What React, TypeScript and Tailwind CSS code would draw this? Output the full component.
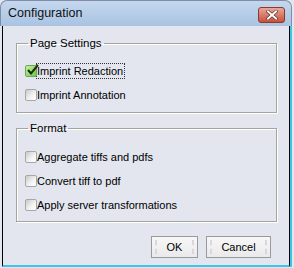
import React from "react";

function Box({ checked }: { checked?: boolean }) {
  return (
    <span className="relative inline-block w-[12px] h-[12px] shrink-0">
      <span
        className={
          checked
            ? "absolute inset-0 rounded-[2px] border border-[#6aa84f] bg-[linear-gradient(135deg,#c8f0a8,#6cc844)]"
            : "absolute inset-0 rounded-[2px] border border-[#a7a7a7] bg-[linear-gradient(135deg,#c9c9c9,#f4f4f4_60%,#ffffff)]"
        }
      />
      {checked && (
        <svg className="absolute left-[1px] top-[-2px]" width="13" height="13" viewBox="0 0 13 13">
          <path d="M2 7 L5 10.5 L12 2" fill="none" stroke="#1b2a12" strokeWidth="2" />
        </svg>
      )}
    </span>
  );
}

function Row({ label, checked, focus }: { label: string; checked?: boolean; focus?: boolean }) {
  return (
    <div className="flex items-center h-[16px]">
      <Box checked={checked} />
      <span
        className={
          focus
            ? "-ml-[1px] pr-[1px] leading-[14px] border border-dotted border-[#333] text-black"
            : "-ml-[1px] leading-[14px] border border-transparent text-black"
        }
      >
        {label}
      </span>
    </div>
  );
}

function Group({ title, children, pt }: { title: string; children: React.ReactNode; pt: string }) {
  return (
    <fieldset
      className={`border border-[#a3a69b] shadow-[inset_1px_1px_0_#ffffff,1px_1px_0_#ffffff] px-[8px] ${pt}`}
    >
      <legend className="ml-[3px] px-[2px] leading-[14px] text-[11.5px] text-black">{title}</legend>
      {children}
    </fieldset>
  );
}

function Btn({ label, w }: { label: string; w: string }) {
  return (
    <div
      className={`relative ${w} h-[22px] border border-[#9a9a9a] bg-[linear-gradient(#f7f7f8,#eaeaec)] flex items-center justify-center text-black`}
    >
      <span className="absolute left-[3px] top-[3px] bottom-[3px] w-[2px] border-l-2 border-dashed border-[#d8d8da]" />
      <span className="absolute right-[3px] top-[3px] bottom-[3px] w-[2px] border-r-2 border-dashed border-[#d8d8da]" />
      {label}
    </div>
  );
}

export default function App() {
  return (
    <div className="w-[294px] h-[268px] bg-[#e3e6ef] flex flex-col overflow-hidden font-['Liberation_Sans',Arial,sans-serif] text-[11px]">
      <div className="h-[26px] shrink-0 rounded-t-[7px] border-t border-x border-[#7f8ea6] mr-[2px] bg-[linear-gradient(#c4d7ee,#a9c3e2)] flex items-center justify-between pl-[7px] pr-[6px]">
        <span className="text-[12.5px] text-[#111] font-['Liberation_Sans',Arial,sans-serif]">Configuration</span>
        <div className="w-[27px] h-[16px] rounded-[3px] border border-[#8a3a2e] bg-[linear-gradient(#e9a79a,#c8503b)] flex items-center justify-center mt-[3px]">
          <svg width="12" height="10" viewBox="0 0 12 10">
            <path d="M2 1.5 L10 8.5 M10 1.5 L2 8.5" stroke="#5a2a22" strokeWidth="3.2" strokeLinecap="square" />
            <path d="M2 1.5 L10 8.5 M10 1.5 L2 8.5" stroke="#ffffff" strokeWidth="2" strokeLinecap="square" />
          </svg>
        </div>
      </div>
      <div className="flex-1 flex mb-[1px]">
        <div className="w-[2px] bg-[#e3e6ef]" />
        <div className="flex-1 flex flex-col border-l border-r border-black border-b-2 border-b-[#40c4e6] pl-[13px] pr-[12px] pt-[10px]">
          <Group title="Page Settings" pt="pt-[13px] pb-[9px]">
            <div className="flex flex-col gap-[8px]">
              <Row label="Imprint Redaction" checked focus />
              <Row label="Imprint Annotation" />
            </div>
          </Group>
          <div className="h-[8px]" />
          <Group title="Format" pt="pt-[14px] pb-[8px]">
            <div className="flex flex-col gap-[8px]">
              <Row label="Aggregate tiffs and pdfs" />
              <Row label="Convert tiff to pdf" />
              <Row label="Apply server transformations" />
            </div>
          </Group>
          <div className="flex justify-end gap-[8px] mt-[14px] pr-[6px]">
            <Btn label="OK" w="w-[47px]" />
            <Btn label="Cancel" w="w-[65px]" />
          </div>
        </div>
        <div className="w-[2px] bg-[#40c4e6]" />
        <div className="w-[2px] bg-[#e3e6ef]" />
      </div>
    </div>
  );
}
